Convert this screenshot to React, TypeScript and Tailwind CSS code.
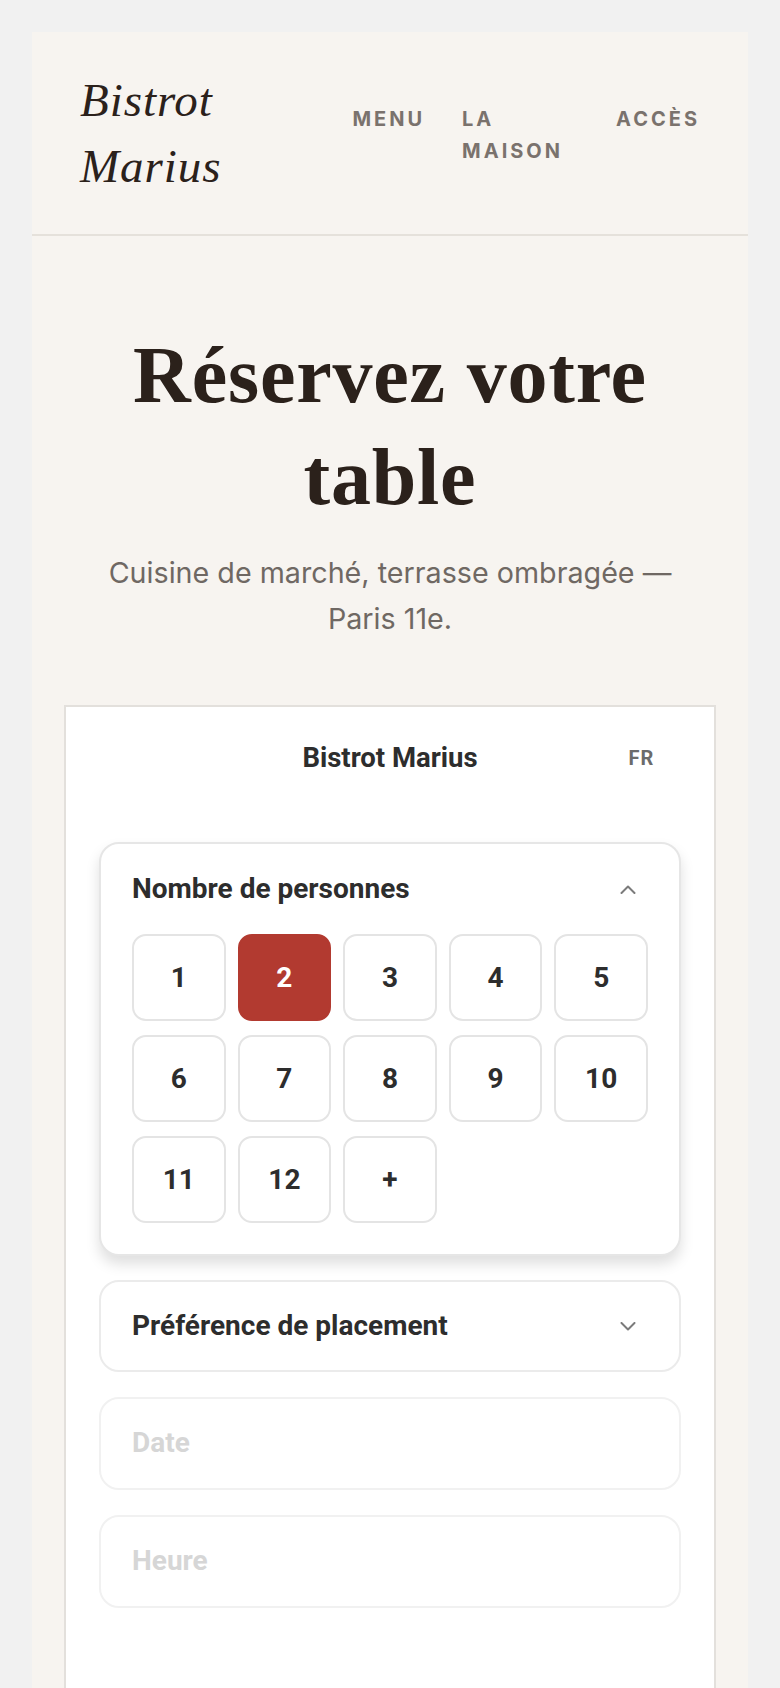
import { useState } from "react";

const serif = { fontFamily: '"Liberation Serif", "DejaVu Serif", serif' };

function Chevron({ up }: { up?: boolean }) {
  return (
    <svg width="16" height="9" viewBox="0 0 16 9" fill="none" className="shrink-0">
      {up ? (
        <polyline points="1.5,8 8,1.5 14.5,8" stroke="#7b7b7b" strokeWidth="2" strokeLinecap="round" strokeLinejoin="round" />
      ) : (
        <polyline points="1.5,1 8,7.5 14.5,1" stroke="#7b7b7b" strokeWidth="2" strokeLinecap="round" strokeLinejoin="round" />
      )}
    </svg>
  );
}

export default function App() {
  const [guests, setGuests] = useState(2);
  const counts = ["1", "2", "3", "4", "5", "6", "7", "8", "9", "10", "11", "12", "+"];

  return (
    <div className="h-screen overflow-hidden bg-[#f1f1f1] px-8 pt-8">
      <div className="bg-[#f7f4f0]">
        {/* header */}
        <header className="flex items-center justify-between border-b-2 border-[#e5e1db] px-12 py-[35px]">
          <div
            className="max-w-[200px] text-[47px] italic leading-[66px] tracking-[0.02em] text-[#2b211b]"
            style={serif}
          >
            Bistrot Marius
          </div>
          <nav
            className="flex gap-[37px] pt-1 text-[20px] font-bold uppercase leading-[32px] tracking-[0.15em] text-[#7a726d]"
            style={{ fontFamily: "Inter, Roboto, sans-serif" }}
          >
            <a>Menu</a>
            <a className="w-[117px]">La Maison</a>
            <a>Accès</a>
          </nav>
        </header>

        {/* hero */}
        <section className="px-8 pt-[88px]">
          <h1
            className="text-center text-[80px] font-bold leading-[102px] tracking-[0.01em] text-[#2b211b]"
            style={serif}
          >
            Réservez votre table
          </h1>
          <p
            className="mx-auto mt-[22px] max-w-[610px] text-center text-[28.7px] leading-[46px] text-[#6f6863]"
            style={{ fontFamily: "Inter, Roboto, sans-serif" }}
          >
            Cuisine de marché, terrasse ombragée — Paris 11e.
          </p>

          {/* widget */}
          <div
            className="mt-[63px] border-2 border-[#e3e0dc] bg-white pb-[140px]"
            style={{ fontFamily: "Roboto, Inter, sans-serif" }}
          >
            <div className="grid h-[102px] grid-cols-[1fr_auto_1fr] items-center px-[60px]">
              <div />
              <div className="text-[27.5px] font-bold text-[#2d2d2d]">Bistrot Marius</div>
              <div className="justify-self-end text-[20px] font-bold tracking-[0.04em] text-[#6b6b6b]">FR</div>
            </div>

            <div className="flex flex-col gap-[25px] px-[33px] pt-[33px]">
              <div className="mb-[-1px] rounded-[20px] border-2 border-[#e6e6e6] bg-white px-[31px] pb-[31px] pt-[30px] shadow-[0_8px_14px_rgba(0,0,0,0.13)]">
                <div className="flex items-center justify-between">
                  <span className="text-[28px] font-bold leading-[30px] text-[#2d2d2d]">Nombre de personnes</span>
                  <span className="mr-[12px]">
                    <Chevron up />
                  </span>
                </div>
                <div className="mt-[30px] grid grid-cols-5 gap-x-3 gap-y-[14px]">
                  {counts.map((c, i) => {
                    const active = i + 1 === guests;
                    return (
                      <button
                        key={c}
                        onClick={() => setGuests(i + 1)}
                        className={
                          active
                            ? "flex h-[87px] items-center justify-center rounded-[14px] border-2 border-[#b23a30] bg-[#b23a30] text-[28px] font-bold text-white"
                            : "flex h-[87px] items-center justify-center rounded-[14px] border-2 border-[#e4e4e4] bg-white text-[28px] font-bold text-[#2d2d2d]"
                        }
                      >
                        {c}
                      </button>
                    );
                  })}
                </div>
              </div>

              <div className="flex items-center justify-between rounded-[20px] border-2 border-[#ebebeb] bg-white px-[31px] py-[29px]">
                <span className="text-[28px] font-bold leading-[30px] text-[#2d2d2d]">Préférence de placement</span>
                <span className="mr-[12px]">
                  <Chevron />
                </span>
              </div>

              <div className="rounded-[20px] border-2 border-[#f1f1f1] bg-white px-[31px] py-[29px]">
                <span className="text-[28px] font-bold leading-[30px] text-[#d6d6d6]">Date</span>
              </div>

              <div className="rounded-[20px] border-2 border-[#f1f1f1] bg-white px-[31px] py-[29px]">
                <span className="text-[28px] font-bold leading-[30px] text-[#d6d6d6]">Heure</span>
              </div>
            </div>
          </div>
        </section>
      </div>
    </div>
  );
}
